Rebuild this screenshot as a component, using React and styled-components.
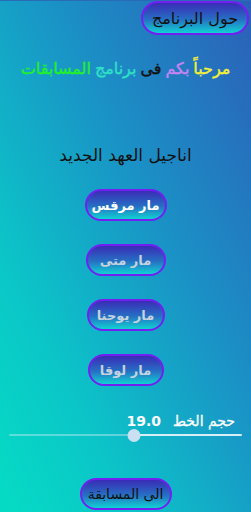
import styled, { createGlobalStyle } from 'styled-components'
import { useState } from 'react'

const GlobalStyle = createGlobalStyle`
  html, body { margin: 0; padding: 0; }
  body { font-family: 'DejaVu Sans', 'Noto Sans', sans-serif; }
`

const Screen = styled.div`
  width: 251px;
  height: 512px;
  box-sizing: border-box;
  direction: rtl;
  display: flex;
  flex-direction: column;
  align-items: center;
  background: linear-gradient(to bottom left, #2c5fb8 0%, #1a92c6 40%, #0bc6c8 75%, #05dcc4 100%);
  border-top: 1px solid #2a6bb6;
  overflow: hidden;
`

const PillButton = styled.button`
  height: ${p => p.$h || 32}px;
  width: ${p => p.$w}px;
  border-radius: 999px;
  border: 2px solid #7220f2;
  background: linear-gradient(to bottom, #3a2cb6 0%, #2670c4 55%, #10d2d2 100%);
  color: ${p => p.$color || '#c6d2de'};
  font-family: 'DejaVu Sans', sans-serif;
  font-size: ${p => p.$size || 13}px;
  font-weight: ${p => p.$weight || 'bold'};
  display: flex;
  align-items: center;
  justify-content: center;
  padding: 0;
  cursor: pointer;
`

const TopRow = styled.div`
  width: 100%;
  display: flex;
  justify-content: flex-start;
  padding-right: 2px;
  box-sizing: border-box;
`

const Welcome = styled.div`
  margin-top: 24px;
  font-size: 16px;
  display: flex;
  gap: 4px;
`

const Word = styled.span`
  color: ${p => p.$c};
  -webkit-text-stroke: 0.4px ${p => p.$c};
`

const Heading = styled.div`
  margin-top: 67px;
  font-size: 17px;
  color: #111;
`

const BookList = styled.div`
  margin-top: 24px;
  display: flex;
  flex-direction: column;
  align-items: center;
  gap: 23px;
`

const SliderBlock = styled.div`
  margin-top: 27px;
  width: 100%;
  padding: 0 9px 0 9px;
  box-sizing: border-box;
  display: flex;
  flex-direction: column;
`

const SliderLabel = styled.div`
  display: flex;
  align-items: baseline;
  gap: 12px;
  padding-right: 7px;
  color: #fff;
  font-size: 14px;
  -webkit-text-stroke: 0.3px #fff;
`

const Value = styled.span`
  font-weight: bold;
  font-size: 14px;
  direction: ltr;
  -webkit-text-stroke: 0;
`

const Track = styled.div`
  position: relative;
  height: 12px;
`

const Line = styled.div`
  position: absolute;
  top: 5px;
  height: 2px;
  border-radius: 1px;
  background: ${p => p.$active ? '#d8eef6' : 'rgba(200, 235, 245, 0.45)'};
`

const Thumb = styled.div`
  position: absolute;
  top: 0;
  width: 13px;
  height: 13px;
  border-radius: 50%;
  background: #c8e0f2;
  transform: translateX(-50%);
`

const Bottom = styled.div`
  margin-top: auto;
  margin-bottom: 2px;
`

const books = ['مار مرقس', 'مار متى', 'مار يوحنا', 'مار لوقا']

export default function App() {
  const [size] = useState(19)
  const pct = 0.535

  return (
    <>
      <GlobalStyle />
      <Screen>
        <TopRow>
          <PillButton $w={108} $h={34} $color="#111" $size={16} $weight="normal">حول البرنامج</PillButton>
        </TopRow>
        <Welcome>
          <Word $c="#f4f03a">مرحباً</Word>
          <Word $c="#c884f2">بكم</Word>
          <Word $c="#111">فى</Word>
          <Word $c="#2ee0c6">برنامج</Word>
          <Word $c="#22f02a">المسابقات</Word>
        </Welcome>
        <Heading>اناجيل العهد الجديد</Heading>
        <BookList>
          {books.map((b, i) => (
            <PillButton key={b} $w={82 - i * 2} $color={i === 0 ? '#fff' : '#c6d2de'}>{b}</PillButton>
          ))}
        </BookList>
        <SliderBlock>
          <SliderLabel>
            <span>حجم الخط</span>
            <Value>{size.toFixed(1)}</Value>
          </SliderLabel>
          <Track>
            <Line $active style={{ left: `${pct * 100}%`, right: 0 }} />
            <Line style={{ left: 0, right: `${(1 - pct) * 100}%` }} />
            <Thumb style={{ left: `${pct * 100}%` }} />
          </Track>
        </SliderBlock>
        <Bottom>
          <PillButton $w={92} $color="#111" $size={14} $weight="normal">الى المسابقة</PillButton>
        </Bottom>
      </Screen>
    </>
  )
}
